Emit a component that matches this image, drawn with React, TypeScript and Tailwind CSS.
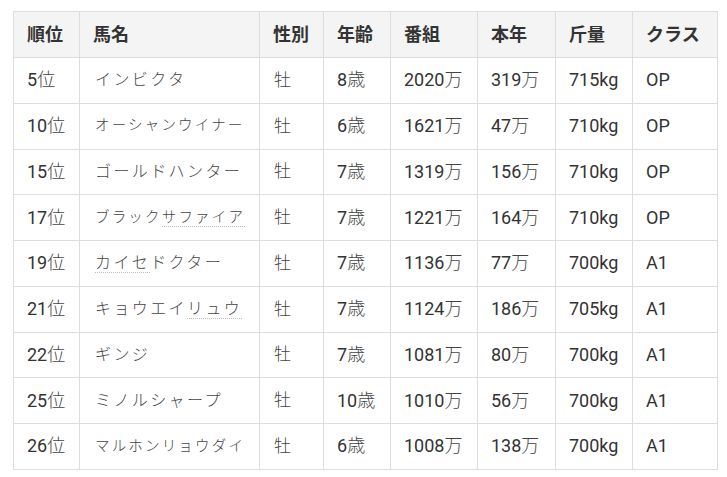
import React from "react";

type Row = {
  rank: string;
  name: React.ReactNode;
  small?: boolean;
  sex: string;
  age: string;
  total: string;
  year: string;
  weight: string;
  cls: string;
};

const dot = "border-b border-dotted border-[#bbb]";

const rows: Row[] = [
  { rank: "5位", name: "インビクタ", sex: "牡", age: "8歳", total: "2020万", year: "319万", weight: "715kg", cls: "OP" },
  { rank: "10位", name: "オーシャンウイナー", small: true, sex: "牡", age: "6歳", total: "1621万", year: "47万", weight: "710kg", cls: "OP" },
  { rank: "15位", name: "ゴールドハンター", sex: "牡", age: "7歳", total: "1319万", year: "156万", weight: "710kg", cls: "OP" },
  {
    rank: "17位",
    name: (
      <>
        ブラック<span className={dot}>サファイア</span>
      </>
    ),
    small: true,
    sex: "牡",
    age: "7歳",
    total: "1221万",
    year: "164万",
    weight: "710kg",
    cls: "OP",
  },
  {
    rank: "19位",
    name: (
      <>
        <span className={dot}>カイセ</span>ドクター
      </>
    ),
    sex: "牡",
    age: "7歳",
    total: "1136万",
    year: "77万",
    weight: "700kg",
    cls: "A1",
  },
  {
    rank: "21位",
    name: (
      <>
        キョウエイ<span className={dot}>リュウ</span>
      </>
    ),
    sex: "牡",
    age: "7歳",
    total: "1124万",
    year: "186万",
    weight: "705kg",
    cls: "A1",
  },
  { rank: "22位", name: "ギンジ", sex: "牡", age: "7歳", total: "1081万", year: "80万", weight: "700kg", cls: "A1" },
  { rank: "25位", name: "ミノルシャープ", sex: "牡", age: "10歳", total: "1010万", year: "56万", weight: "700kg", cls: "A1" },
  { rank: "26位", name: "マルホンリョウダイ", small: true, sex: "牡", age: "6歳", total: "1008万", year: "138万", weight: "700kg", cls: "A1" },
];

const headers = ["順位", "馬名", "性別", "年齢", "番組", "本年", "斤量", "クラス"];
const widths = [66, 180, 64, 67, 87, 78, 77, 85];

function Val({ v }: { v: string }) {
  const m = v.match(/^([0-9A-Za-z]+)(.*)$/);
  if (!m) return <>{v}</>;
  const tail = m[2];
  const isCjk = /[^\x00-\x7f]/.test(tail);
  return (
    <>
      {m[1]}
      {tail && (isCjk ? <span className="font-light text-[#444]">{tail}</span> : tail)}
    </>
  );
}

const cell = "h-[45.75px] border border-[#dddddd] px-[13px] align-middle leading-none";

export default function App() {
  return (
    <div
      className="w-[727px] h-[477px] bg-white pl-[13px] pt-[11px] text-[#333]"
      style={{ fontFamily: 'Roboto, "Noto Sans CJK JP", sans-serif' }}
    >
      <table className="table-fixed border-collapse w-[704px] text-[18px]">
        <colgroup>
          {widths.map((w, i) => (
            <col key={i} style={{ width: w }} />
          ))}
        </colgroup>
        <thead>
          <tr className="bg-[#f4f4f4]">
            {headers.map((h) => (
              <th
                key={h}
                className="h-[46px] border border-[#dddddd] px-[13px] text-left align-middle font-bold leading-none"
              >
                {h}
              </th>
            ))}
          </tr>
        </thead>
        <tbody>
          {rows.map((r) => (
            <tr key={r.rank}>
              <td className={cell}>
                <Val v={r.rank} />
              </td>
              <td
                className={`${cell} px-[15px] font-light text-[#444] whitespace-nowrap tracking-[0.15em] ${
                  r.small ? "text-[14.5px]" : "text-[16px]"
                }`}
              >
                <span className="leading-[1.5]">{r.name}</span>
              </td>
              <td className={`${cell} px-[14px] font-light text-[#444] text-[17px]`}>{r.sex}</td>
              <td className={cell}>
                <Val v={r.age} />
              </td>
              <td className={cell}>
                <Val v={r.total} />
              </td>
              <td className={cell}>
                <Val v={r.year} />
              </td>
              <td className={cell}>{r.weight}</td>
              <td className={cell}>{r.cls}</td>
            </tr>
          ))}
        </tbody>
      </table>
    </div>
  );
}
